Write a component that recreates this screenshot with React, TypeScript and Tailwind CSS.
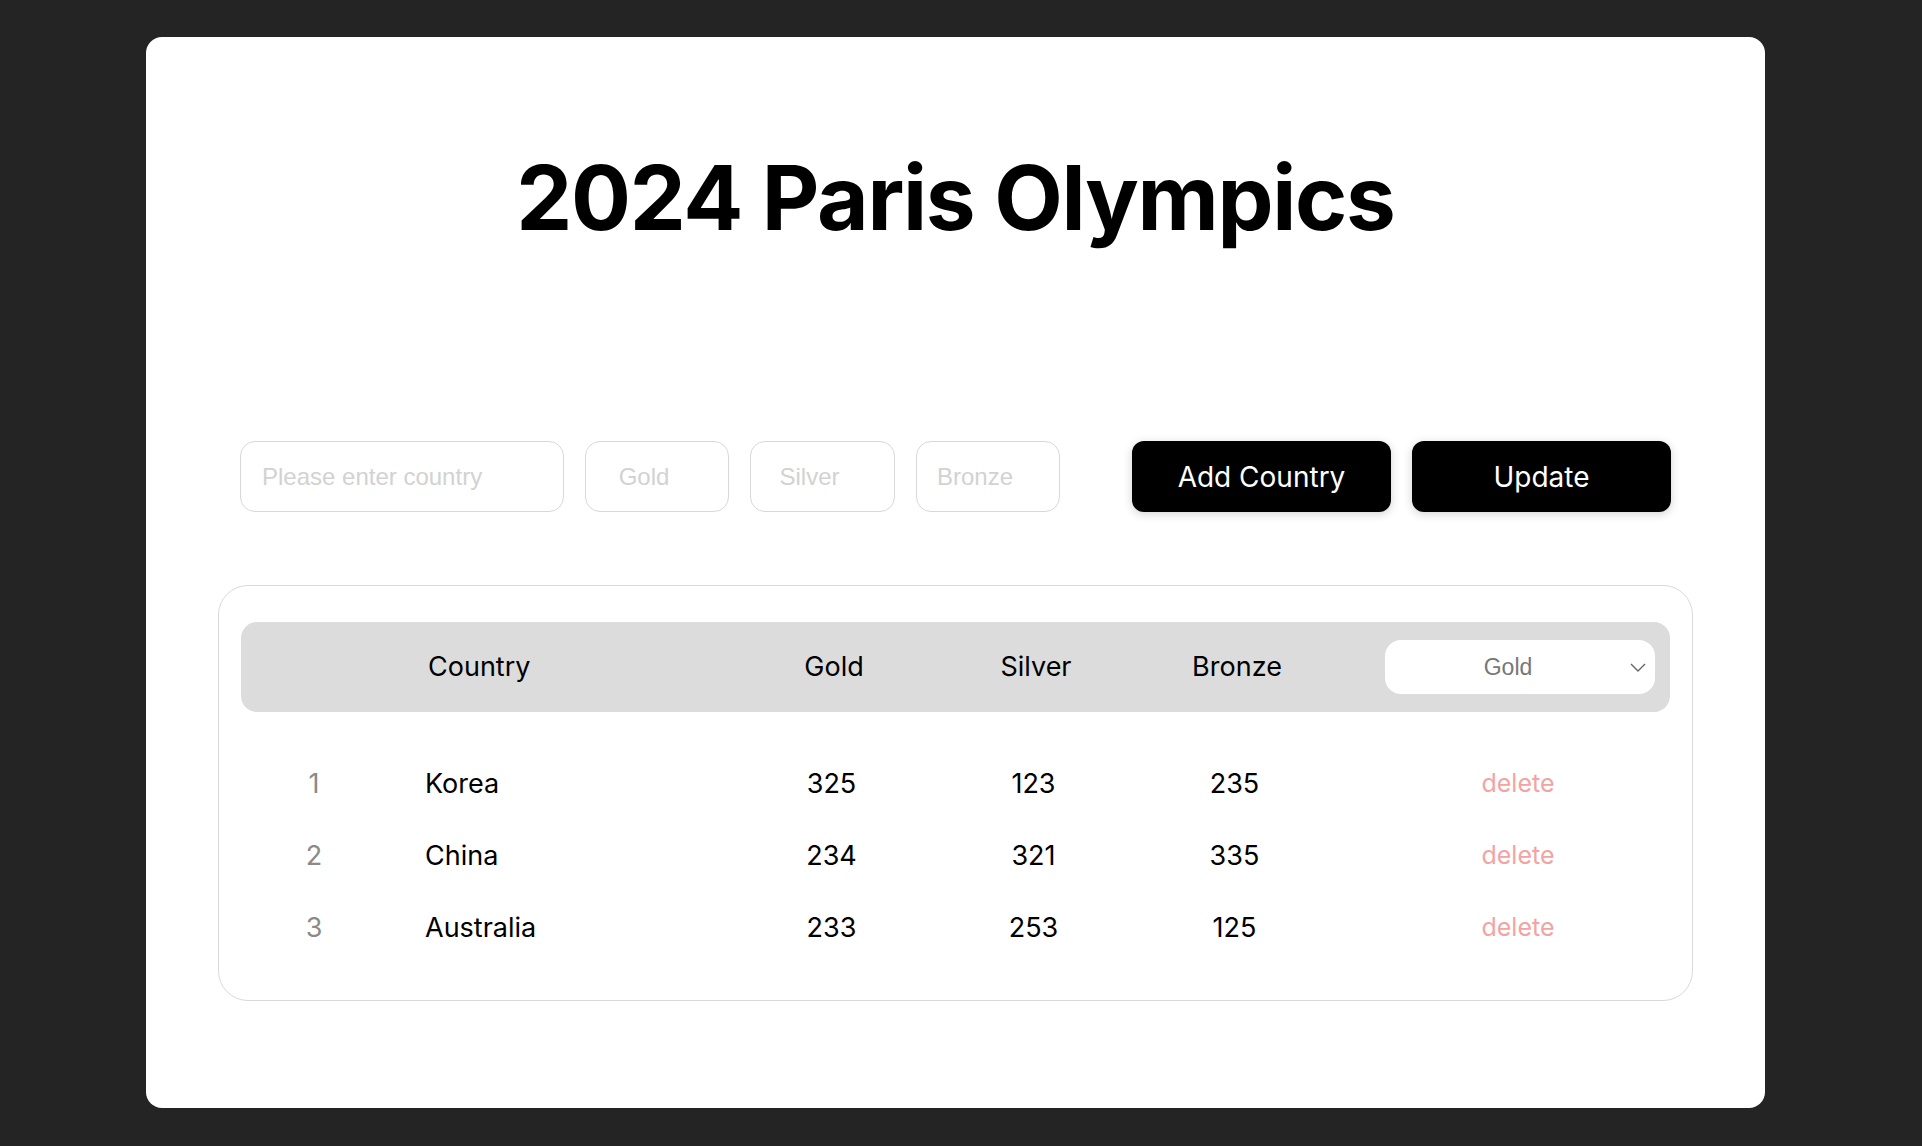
import React from "react";

const rows = [
  { n: 1, name: "Korea", g: 325, s: 123, b: 235 },
  { n: 2, name: "China", g: 234, s: 321, b: 335 },
  { n: 3, name: "Australia", g: 233, s: 253, b: 125 },
];

export default function App() {
  return (
    <div className="min-h-screen w-full bg-[#242424] pt-[37px] pb-[38px] font-['Inter',sans-serif]">
      <div className="ml-[146px] w-[1619px] h-[1071px] rounded-[16px] bg-white pt-[116px]">
        <h1 className="text-center text-[89px] leading-none font-bold text-black tracking-[-1.3px]">
          2024 Paris Olympics
        </h1>

        <div className="mt-[199px] flex items-center px-[94px]">
          <input
            placeholder="Please enter country"
            className="h-[71px] w-[324px] rounded-[15px] border border-[#d8d8d8] px-[21px] text-[24px] font-['Liberation_Sans',Arial,sans-serif] placeholder:text-[#d2d2d2] outline-none"
          />
          <input
            placeholder="Gold"
            className="ml-[21px] h-[71px] w-[144px] rounded-[15px] border border-[#d8d8d8] pl-[8px] pr-[34px] text-center text-[24px] font-['Liberation_Sans',Arial,sans-serif] placeholder:text-[#d2d2d2] outline-none"
          />
          <input
            placeholder="Silver"
            className="ml-[21px] h-[71px] w-[145px] rounded-[15px] border border-[#d8d8d8] pl-[8px] pr-[34px] text-center text-[24px] font-['Liberation_Sans',Arial,sans-serif] placeholder:text-[#d2d2d2] outline-none"
          />
          <input
            placeholder="Bronze"
            className="ml-[21px] h-[71px] w-[144px] rounded-[15px] border border-[#d8d8d8] pl-[8px] pr-[34px] text-center text-[24px] font-['Liberation_Sans',Arial,sans-serif] placeholder:text-[#d2d2d2] outline-none"
          />
          <button className="ml-[72px] h-[71px] w-[260px] rounded-[12px] bg-black text-[28px] font-normal text-white shadow-[0_2px_10px_rgba(0,0,0,0.18)]">
            Add Country
          </button>
          <button className="ml-[21px] h-[71px] w-[260px] rounded-[12px] bg-black text-[28px] font-normal text-white shadow-[0_2px_10px_rgba(0,0,0,0.18)]">
            Update
          </button>
        </div>

        <div className="mx-[72px] mt-[73px] rounded-[30px] border border-[#d9d9d9] px-[22px] pt-[36px] pb-[36px]">
          <div className="grid h-[90px] grid-cols-[146px_346px_202px_202px_200px_1fr] items-center rounded-[16px] bg-[#dcdcdc] text-[27px] text-black">
            <div />
            <div className="pl-[41px]">Country</div>
            <div className="text-center">Gold</div>
            <div className="text-center">Silver</div>
            <div className="text-center">Bronze</div>
            <div className="pl-[48px] pr-[16px]">
              <div className="relative flex h-[54px] w-[270px] items-center justify-center rounded-[16px] bg-white pr-[24px]">
                <span className="text-[23px] text-[#777] font-['Liberation_Sans',Arial,sans-serif]">Gold</span>
                <svg
                  className="absolute right-[7px] top-1/2 -translate-y-1/2"
                  width="20"
                  height="20"
                  viewBox="0 0 20 20"
                  fill="none"
                  stroke="#666"
                  strokeWidth="1.4"
                >
                  <path d="M3 7 L10 14 L17 7" />
                </svg>
              </div>
            </div>
          </div>

          <div className="mt-[36px]">
            {rows.map((r) => (
              <div
                key={r.n}
                className="grid h-[72px] grid-cols-[146px_346px_202px_202px_200px_1fr] items-center text-[27px] text-black"
              >
                <div className="text-center text-[#8a8a8a]">{r.n}</div>
                <div className="pl-[38px]">{r.name}</div>
                <div className="text-center pr-[5px]">{r.g}</div>
                <div className="text-center pr-[5px]">{r.s}</div>
                <div className="text-center pr-[5px]">{r.b}</div>
                <div className="pl-[48px] pr-[16px]">
                  <div className="w-[266px] text-center text-[25px] text-[#f4a3a3]">delete</div>
                </div>
              </div>
            ))}
          </div>
        </div>
      </div>
    </div>
  );
}
